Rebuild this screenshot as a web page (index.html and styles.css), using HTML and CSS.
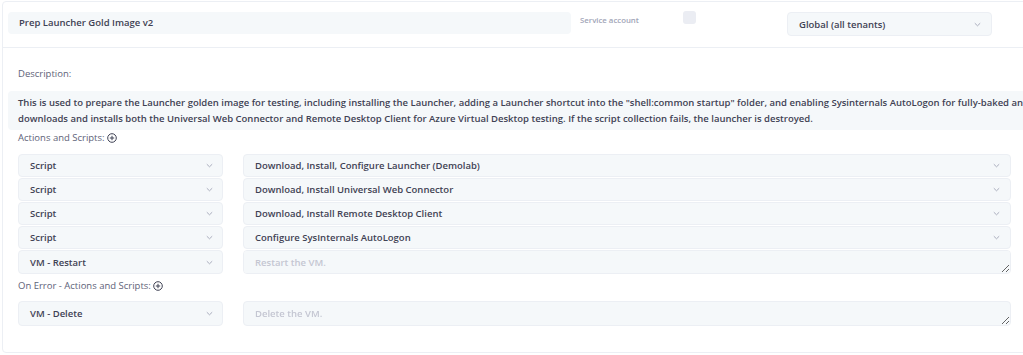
FILE: index.html
```
<!DOCTYPE html>
<html>
<head>
<meta charset="utf-8">
<link rel="stylesheet" href="styles.css">
</head>
<body>
<div class="card">
  <div class="header">
    <div class="name">Prep Launcher Gold Image v2</div>
    <div class="svc">Service account</div>
    <div class="check"></div>
    <div class="select global"><span>Global (all tenants)</span><svg class="chev" width="7" height="5" viewBox="0 0 7 5"><path d="M0.8 1.2 L3.5 3.8 L6.2 1.2" fill="none" stroke="#a1a5b7" stroke-width="0.9"/></svg></div>
  </div>
  <div class="body">
    <div class="label desc-label">Description:</div>
    <div class="desc">This is used to prepare the Launcher golden image for testing, including installing the Launcher, adding a Launcher shortcut into the "shell:common startup" folder, and enabling Sysinternals AutoLogon for fully-baked and<br>downloads and installs both the Universal Web Connector and Remote Desktop Client for Azure Virtual Desktop testing. If the script collection fails, the launcher is destroyed.</div>
    <div class="label section">Actions and Scripts: <svg class="plus" width="10" height="10" viewBox="0 0 10 10"><circle cx="5" cy="5" r="4.3" fill="none" stroke="#3f4254" stroke-width="1"/><path d="M5 2.8 V7.2 M2.8 5 H7.2" stroke="#3f4254" stroke-width="1"/></svg></div>
    <div class="rows">
      <div class="row">
        <div class="select left"><span>Script</span><svg class="chev" width="7" height="5" viewBox="0 0 7 5"><path d="M0.8 1.2 L3.5 3.8 L6.2 1.2" fill="none" stroke="#a1a5b7" stroke-width="0.9"/></svg></div>
        <div class="select right"><span>Download, Install, Configure Launcher (Demolab)</span><svg class="chev" width="7" height="5" viewBox="0 0 7 5"><path d="M0.8 1.2 L3.5 3.8 L6.2 1.2" fill="none" stroke="#a1a5b7" stroke-width="0.9"/></svg></div>
      </div>
      <div class="row">
        <div class="select left"><span>Script</span><svg class="chev" width="7" height="5" viewBox="0 0 7 5"><path d="M0.8 1.2 L3.5 3.8 L6.2 1.2" fill="none" stroke="#a1a5b7" stroke-width="0.9"/></svg></div>
        <div class="select right"><span>Download, Install Universal Web Connector</span><svg class="chev" width="7" height="5" viewBox="0 0 7 5"><path d="M0.8 1.2 L3.5 3.8 L6.2 1.2" fill="none" stroke="#a1a5b7" stroke-width="0.9"/></svg></div>
      </div>
      <div class="row">
        <div class="select left"><span>Script</span><svg class="chev" width="7" height="5" viewBox="0 0 7 5"><path d="M0.8 1.2 L3.5 3.8 L6.2 1.2" fill="none" stroke="#a1a5b7" stroke-width="0.9"/></svg></div>
        <div class="select right"><span>Download, Install Remote Desktop Client</span><svg class="chev" width="7" height="5" viewBox="0 0 7 5"><path d="M0.8 1.2 L3.5 3.8 L6.2 1.2" fill="none" stroke="#a1a5b7" stroke-width="0.9"/></svg></div>
      </div>
      <div class="row">
        <div class="select left"><span>Script</span><svg class="chev" width="7" height="5" viewBox="0 0 7 5"><path d="M0.8 1.2 L3.5 3.8 L6.2 1.2" fill="none" stroke="#a1a5b7" stroke-width="0.9"/></svg></div>
        <div class="select right"><span>Configure SysInternals AutoLogon</span><svg class="chev" width="7" height="5" viewBox="0 0 7 5"><path d="M0.8 1.2 L3.5 3.8 L6.2 1.2" fill="none" stroke="#a1a5b7" stroke-width="0.9"/></svg></div>
      </div>
      <div class="row tall">
        <div class="select left"><span>VM - Restart</span><svg class="chev" width="7" height="5" viewBox="0 0 7 5"><path d="M0.8 1.2 L3.5 3.8 L6.2 1.2" fill="none" stroke="#a1a5b7" stroke-width="0.9"/></svg></div>
        <textarea class="area" placeholder="Restart the VM."></textarea>
      </div>
    </div>
    <div class="label section err">On Error - Actions and Scripts: <svg class="plus" width="10" height="10" viewBox="0 0 10 10"><circle cx="5" cy="5" r="4.3" fill="none" stroke="#3f4254" stroke-width="1"/><path d="M5 2.8 V7.2 M2.8 5 H7.2" stroke="#3f4254" stroke-width="1"/></svg></div>
    <div class="rows">
      <div class="row tall2">
        <div class="select left"><span>VM - Delete</span><svg class="chev" width="7" height="5" viewBox="0 0 7 5"><path d="M0.8 1.2 L3.5 3.8 L6.2 1.2" fill="none" stroke="#a1a5b7" stroke-width="0.9"/></svg></div>
        <textarea class="area" placeholder="Delete the VM."></textarea>
      </div>
    </div>
  </div>
</div>
</body>
</html>
```
FILE: styles.css
```
html, body {
  margin: 0;
  padding: 0;
  background: #ffffff;
  overflow: hidden;
}
body {
  font-family: "Open Sans", "Noto Sans", sans-serif;
  color: #3f4254;
  width: 1023px;
  height: 355px;
}
.card {
  margin: 1px 0 0 2px;
  width: 1080px;
  height: 350px;
  border: 1px solid #eceff4;
  border-radius: 4px;
  box-sizing: content-box;
}
.header {
  display: flex;
  align-items: flex-start;
  height: 35px;
  padding: 10px 0 0 5px;
  border-bottom: 1px solid #eceff4;
}
.name {
  width: 552px;
  height: 22px;
  line-height: 22px;
  padding-left: 11px;
  background: #f5f8fa;
  border-radius: 4px;
  font-size: 9.5px;
  font-weight: 600;
  color: #3f4254;
}
.svc {
  width: 103px;
  margin-left: 9px;
  font-size: 7.8px;
  font-weight: 600;
  color: #a1a5b7;
  line-height: 16px;
}
.check {
  width: 13px;
  height: 13px;
  margin-top: -1px;
  background: #ebedf3;
  border-radius: 3px;
}
.select {
  display: flex;
  align-items: center;
  justify-content: space-between;
  box-sizing: border-box;
  background: #f5f8fa;
  border: 1px solid #eceff4;
  border-radius: 4px;
  font-size: 9.5px;
  font-weight: 600;
  color: #3f4254;
  padding: 0 10px 0 11px;
}
.global {
  margin-left: 91px;
  width: 205px;
  height: 24px;
}
.chev {
  flex: none;
}
.body {
  padding: 18px 0 0 5px;
}
.label {
  margin-left: 10px;
  font-size: 9.5px;
  color: #5e6278;
  line-height: 16px;
}
.desc-label {
  margin-bottom: 9px;
}
.desc {
  width: 1100px;
  padding: 4px 10px;
  background: #f5f8fa;
  border-radius: 4px;
  font-size: 9.5px;
  font-weight: 600;
  line-height: 15.5px;
  color: #3f4254;
  white-space: nowrap;
}
.section {
  display: flex;
  align-items: center;
  gap: 2px;
  line-height: 15px;
  margin-bottom: 9px;
}
.plus {
  flex: none;
}
.err {
  margin-top: 4px;
  margin-bottom: 8px;
}
.rows {
  margin-left: 10px;
}
.row {
  display: flex;
  gap: 20px;
  height: 23px;
  margin-bottom: 1px;
}
.row.tall {
  height: 24px;
}
.row.tall2 {
  height: 25px;
}
.left {
  width: 205px;
  height: 100%;
  padding-right: 9px;
}
.right {
  width: 768px;
  height: 100%;
}
.area {
  width: 768px;
  height: 100%;
  box-sizing: border-box;
  margin: 0;
  resize: vertical;
  background: #f5f8fa;
  border: 1px solid #eceff4;
  border-radius: 4px;
  padding: 5px 11px;
  font-family: "Open Sans", "Noto Sans", sans-serif;
  font-size: 9.5px;
  font-weight: 600;
  color: #3f4254;
  outline: none;
}
.area::placeholder {
  color: #c4c6d2;
}
```
